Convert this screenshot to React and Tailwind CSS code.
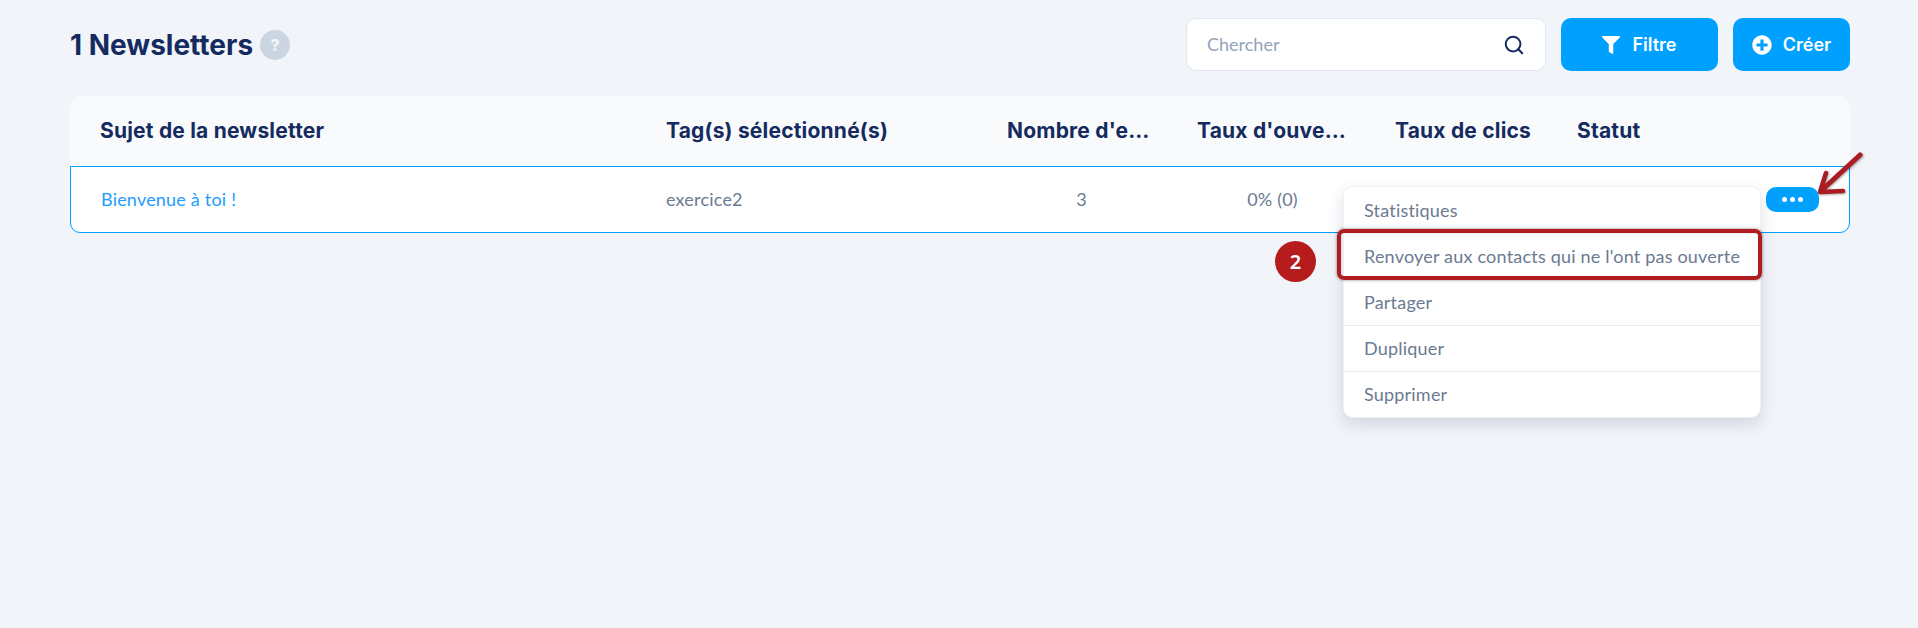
import React from 'react';
import { Search } from 'lucide-react';
import { FaFilter, FaPlusCircle } from 'react-icons/fa';

const COLS = 'grid grid-cols-[566px_329px_210px_190px_182px_1fr] items-center';
const HEAD = "font-['Inter',sans-serif] font-bold text-[21px] tracking-[0.2px] text-[#152b5f] truncate";
const BODY = "font-['Lato',sans-serif] text-[18px] tracking-[0.2px]";

const MENU = ['Statistiques', "Renvoyer aux contacts qui ne l'ont pas ouverte", 'Partager', 'Dupliquer', 'Supprimer'];

function ActionMenu() {
  return (
    <div className="absolute left-[1273px] top-[20px] z-10 w-[418px] rounded-[10px] border border-[#eef1f5] bg-white shadow-[0_6px_16px_rgba(15,41,92,0.15)]">
      {MENU.map((item, i) => (
        <div
          key={item}
          className={`flex h-[46px] items-center whitespace-nowrap pl-[20px] ${BODY} text-[#6b7a90] ${i > 0 ? 'border-t border-[#e8ebef]' : ''}`}
        >
          {item}
        </div>
      ))}
    </div>
  );
}

export default function App() {
  return (
    <div className="min-h-screen bg-[#f1f4f9] pl-[70px] pr-[68px] pt-[18px]">
      {/* Titre + actions */}
      <div className="flex h-[53px] items-center justify-between">
        <div className="flex items-center gap-[7px]">
          <h1 className="font-['Inter',sans-serif] text-[28px] font-bold text-[#152b5f]">1 Newsletters</h1>
          <span className="flex h-[30px] w-[30px] items-center justify-center rounded-full bg-[#cbd5e1] font-['Inter',sans-serif] text-[16px] font-extrabold text-[#f1f4f9]">
            ?
          </span>
        </div>
        <div className="flex items-center">
          <div className="flex h-[53px] w-[360px] items-center justify-between rounded-[10px] border border-[#e2e8f0] bg-white pl-[20px] pr-[20px]">
            <span className="font-['Lato',sans-serif] text-[18px] text-[#94a3b8]">Chercher</span>
            <Search size={22} strokeWidth={2.2} className="text-[#152b5f]" />
          </div>
          <button className="ml-[15px] flex h-[53px] w-[157px] items-center justify-center gap-[12px] rounded-[10px] bg-[#00a0ff] font-['Inter',sans-serif] text-[18px] font-semibold text-white">
            <FaFilter size={18} />
            Filtre
          </button>
          <button className="ml-[15px] flex h-[53px] w-[117px] items-center justify-center gap-[11px] rounded-[10px] bg-[#00a0ff] font-['Inter',sans-serif] text-[18px] font-semibold text-white">
            <FaPlusCircle size={20} />
            Créer
          </button>
        </div>
      </div>

      {/* Tableau */}
      <div className="mt-[25px]">
        <div className={`${COLS} h-[70px] rounded-t-[10px] bg-[#f8fafc]`}>
          <div className="pl-[30px] pr-[20px]"><div className={HEAD}>Sujet de la newsletter</div></div>
          <div className="pl-[30px] pr-[20px]"><div className={HEAD}>Tag(s) sélectionné(s)</div></div>
          <div className="pl-[42px] pr-[24px]"><div className={HEAD}>Nombre d'envois</div></div>
          <div className="pl-[22px] pr-[14px]"><div className={HEAD}>Taux d'ouverture</div></div>
          <div className="pl-[30px] pr-[10px]"><div className={HEAD}>Taux de clics</div></div>
          <div className="pl-[30px]"><div className={HEAD}>Statut</div></div>
        </div>

        <div className="relative">
          <div className={`${COLS} h-[67px] rounded-b-[10px] border border-[#00a0ff] bg-white`}>
            <div className={`pl-[30px] ${BODY} text-[#1e9bff]`}>Bienvenue à toi !</div>
            <div className={`pl-[29px] ${BODY} text-[#6b7a90]`}>exercice2</div>
            <div className={`pl-[41px] pr-[20px] text-center ${BODY} text-[#6b7a90]`}>3</div>
            <div className={`pl-[21px] pr-[18px] text-center ${BODY} text-[#6b7a90]`}>0% (0)</div>
            <div />
            <div className="flex justify-end pr-[30px]">
              <button className="flex h-[25px] w-[53px] items-center justify-center gap-[3px] rounded-[10px] bg-[#00a0ff]">
                <span className="h-[5px] w-[5px] rounded-full bg-white" />
                <span className="h-[5px] w-[5px] rounded-full bg-white" />
                <span className="h-[5px] w-[5px] rounded-full bg-white" />
              </button>
            </div>
          </div>

          <ActionMenu />

          {/* Annotations */}
          <div className="absolute left-[1267px] top-[63px] z-20 h-[51px] w-[425px] rounded-[7px] border-[4px] border-[#b01c20] shadow-[0_0_3px_rgba(60,20,20,0.6)]" />
          <div className="absolute left-[1205px] top-[75px] z-20 flex h-[41px] w-[41px] items-center justify-center rounded-full bg-[#b71c1c] font-['Noto_Sans',sans-serif] text-[20px] font-semibold text-white">
            2
          </div>
          <svg className="absolute left-[1740px] top-[-20px] z-20 drop-shadow-[1px_1px_1px_rgba(0,0,0,0.35)]" width="60" height="60" viewBox="0 0 60 60" fill="none">
            <path d="M50 9 L13 43" stroke="#a81c22" strokeWidth="5" strokeLinecap="round" />
            <path d="M16 27 L10 46 L33 45" stroke="#a81c22" strokeWidth="4.5" strokeLinecap="round" strokeLinejoin="round" />
          </svg>
        </div>
      </div>
    </div>
  );
}
